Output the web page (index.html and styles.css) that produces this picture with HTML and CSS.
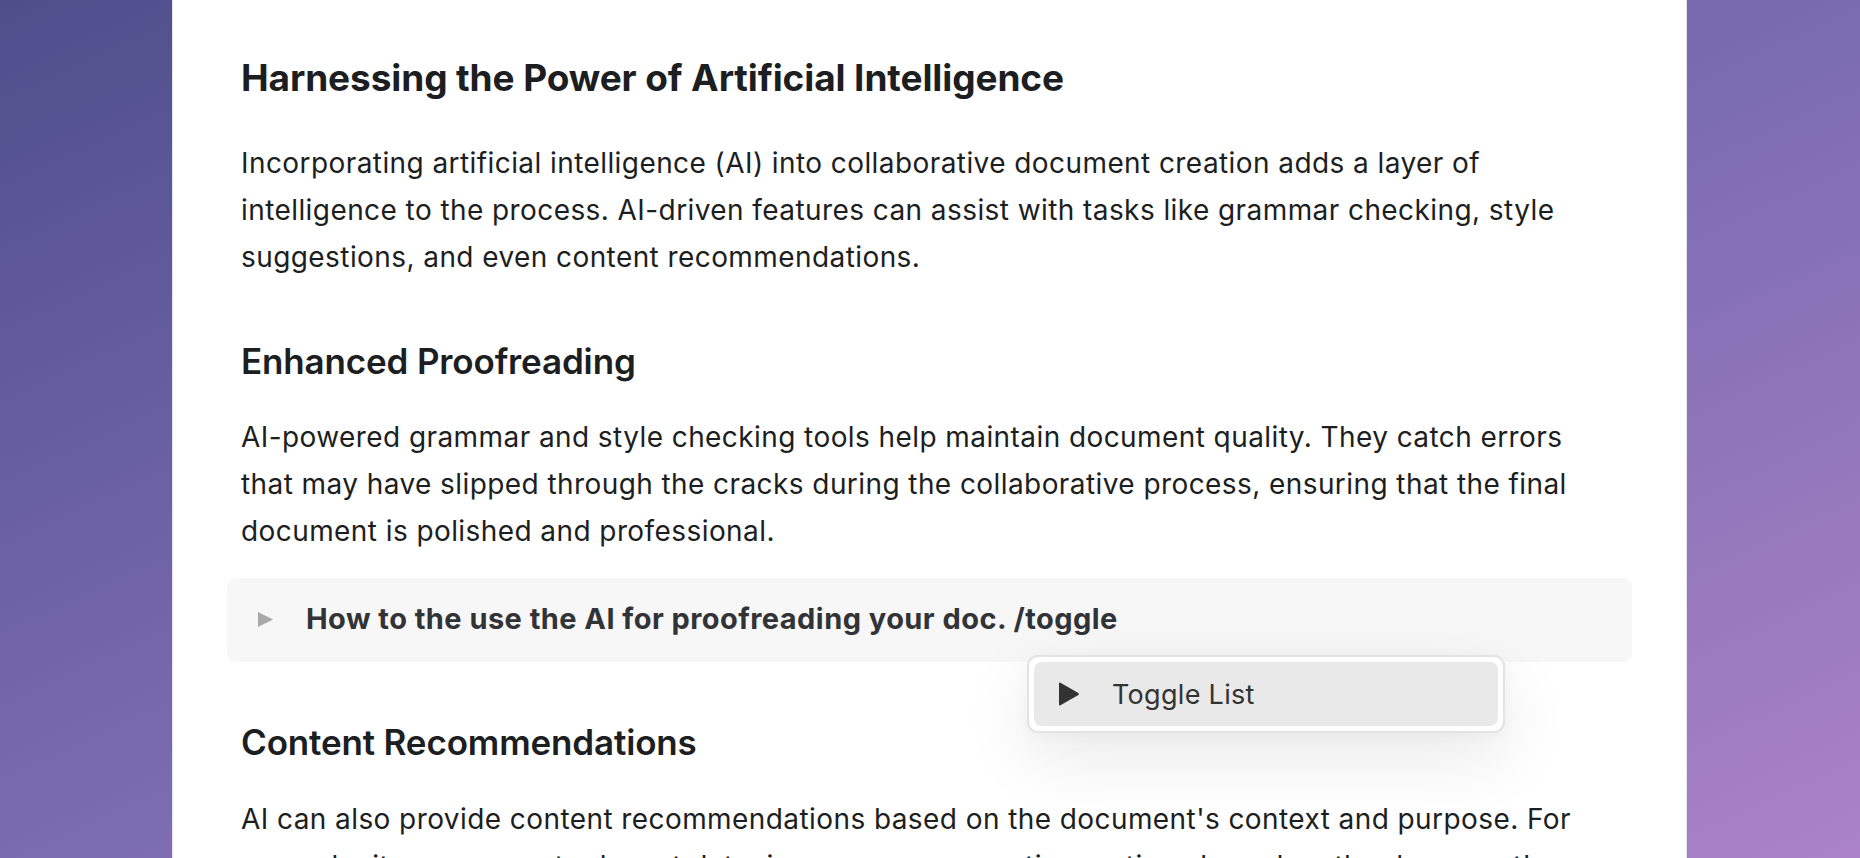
FILE: index.html
```
<!DOCTYPE html>
<html lang="en">
<head>
<meta charset="utf-8">
<title>Harnessing the Power of Artificial Intelligence</title>
<link rel="stylesheet" href="styles.css">
</head>
<body>
<main class="page">
  <article class="doc">
    <h1 class="h1">Harnessing the Power of Artificial Intelligence</h1>
    <p class="para p1">Incorporating artificial intelligence (AI) into collaborative document creation adds a layer of intelligence to the process. AI-driven features can assist with tasks like grammar checking, style suggestions, and even content recommendations.</p>
    <h2 class="h2 sub1">Enhanced Proofreading</h2>
    <p class="para p2">AI-powered grammar and style checking tools help maintain document quality. They catch errors that may have slipped through the cracks during the collaborative process, ensuring that the final document is polished and professional.</p>
    <div class="toggle">
      <svg class="toggle-arrow" viewBox="0 0 17 17" width="17" height="17"><path d="M1 1 L16 8.5 L1 16 Z" fill="#a9a9a9"/></svg>
      <span class="toggle-text">How to the use the AI for proofreading your doc. /toggle</span>
      <div class="menu">
        <div class="menu-item">
          <svg class="menu-icon" viewBox="0 0 23 26" width="23" height="26"><path d="M2 2.6 Q2 1 3.4 1.8 L21.4 11.9 Q22.6 13 21.4 14.1 L3.4 24.2 Q2 25 2 23.4 Z" fill="#333333"/></svg>
          <span class="menu-label">Toggle List</span>
        </div>
      </div>
    </div>
    <h2 class="h2 sub2">Content Recommendations</h2>
    <p class="para p3">AI can also provide content recommendations based on the document's context and purpose. For example, it can suggest relevant data, images, or even entire sections based on the document's topic and the needs of its readers.</p>
  </article>
</main>
</body>
</html>
```
FILE: styles.css
```
* { box-sizing: border-box; }
html, body { margin: 0; padding: 0; }
body {
  height: 858px;
  overflow: hidden;
  background: linear-gradient(to bottom right, #4f4e8b 0%, #7a6bb0 50%, #ab82c7 100%);
  font-family: Inter, "Noto Sans", "Liberation Sans", sans-serif;
  padding-left: 172px;
}
.page {
  width: 1515px;
  min-height: 100%;
  background: #ffffff;
  border-left: 1px solid #e4e2ee;
  border-right: 1px solid #e6e6e6;
  padding: 54px 68px 0 68px;
}
.doc { color: #1c1e21; }
.h1 {
  margin: 0;
  font-size: 37px;
  line-height: 48px;
  font-weight: 700;
  letter-spacing: -0.1px;
}
.h2 {
  margin: 0;
  font-size: 35px;
  line-height: 46px;
  font-weight: 600;
  letter-spacing: -0.15px;
}
.para {
  margin: 0;
  max-width: 1350px;
  font-size: 28px;
  line-height: 47px;
  font-weight: 400;
  letter-spacing: 0.42px;
}
.p1 { margin-top: 38px; }
.sub1 { margin-top: 57px; }
.p2 { margin-top: 30px; }
.toggle {
  position: relative;
  margin: 23px -14px 0 -14px;
  background: #f7f7f7;
  border-radius: 9px;
  padding: 21px 14px 23px 30px;
  display: flex;
  align-items: center;
  gap: 32px;
}
.toggle-arrow { flex: none; }
.toggle-text {
  font-size: 29px;
  line-height: 40px;
  font-weight: 700;
  color: #323336;
  letter-spacing: 0.45px;
}
.menu {
  position: absolute;
  left: 800px;
  top: 77px;
  width: 478px;
  height: 78px;
  background: #ffffff;
  border: 2px solid #e3e3e3;
  border-radius: 11px;
  padding: 5px;
  box-shadow: 0 24px 70px rgba(0, 0, 0, 0.09), 0 4px 14px rgba(0, 0, 0, 0.03);
  z-index: 2;
}
.menu-item {
  height: 64px;
  background: #e9e9e9;
  border-radius: 8px;
  display: flex;
  align-items: center;
  padding-left: 23px;
  gap: 32px;
}
.menu-icon { flex: none; }
.menu-label {
  font-size: 27px;
  color: #333333;
  letter-spacing: 0.3px;
}
.sub2 { margin-top: 57px; }
.p3 { margin-top: 31px; }
```
